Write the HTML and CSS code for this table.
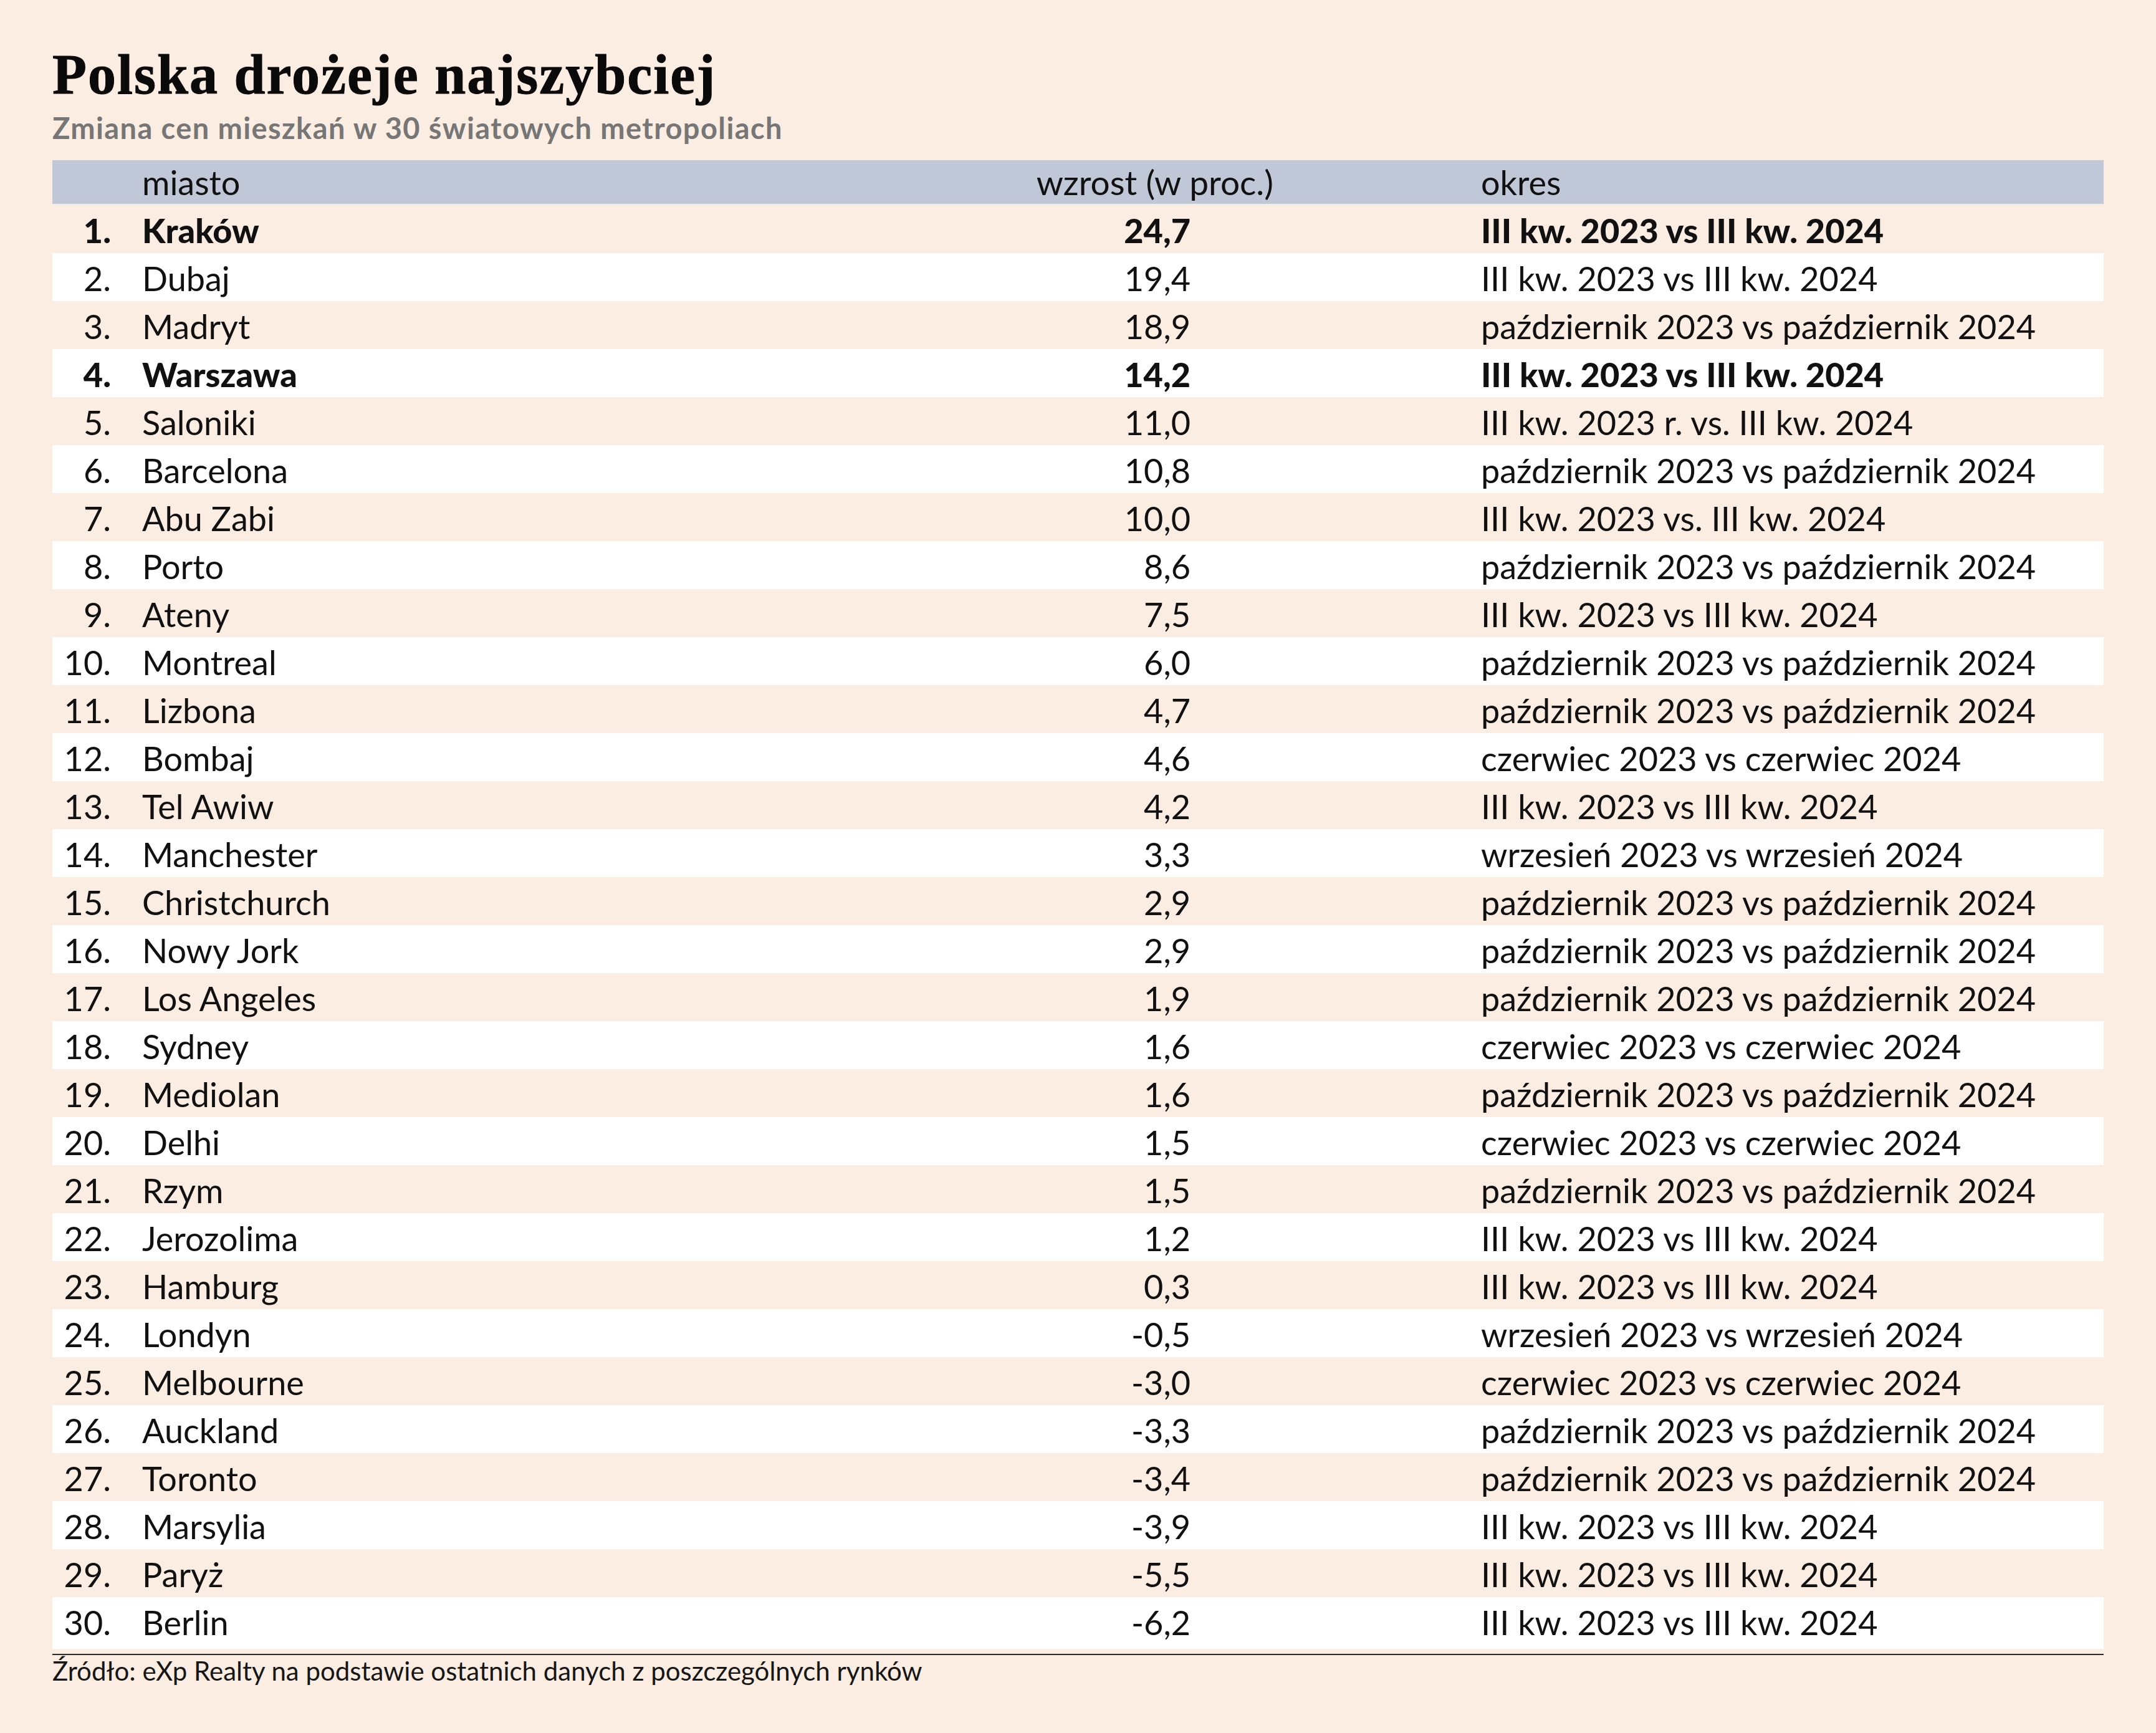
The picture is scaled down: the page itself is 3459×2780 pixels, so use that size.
FILE: index.html
```html
<!DOCTYPE html>
<html lang="pl">
<head>
<meta charset="utf-8">
<title>Polska drożeje najszybciej</title>
<link rel="stylesheet" href="styles.css">
</head>
<body>
<div class="page">
  <h1 class="title">Polska drożeje najszybciej</h1>
  <p class="subtitle">Zmiana cen mieszkań w 30 światowych metropoliach</p>
  <div class="table">
    <div class="row head">
      <span class="num"></span><span class="city">miasto</span><span class="val head-val">wzrost (w proc.)</span><span class="per">okres</span>
    </div>
    <div class="row bold"><span class="num">1.</span><span class="city">Kraków</span><span class="val">24,7</span><span class="per">III kw. 2023 vs III kw. 2024</span></div>
    <div class="row"><span class="num">2.</span><span class="city">Dubaj</span><span class="val">19,4</span><span class="per">III kw. 2023 vs III kw. 2024</span></div>
    <div class="row"><span class="num">3.</span><span class="city">Madryt</span><span class="val">18,9</span><span class="per">październik 2023 vs październik 2024</span></div>
    <div class="row bold"><span class="num">4.</span><span class="city">Warszawa</span><span class="val">14,2</span><span class="per">III kw. 2023 vs III kw. 2024</span></div>
    <div class="row"><span class="num">5.</span><span class="city">Saloniki</span><span class="val">11,0</span><span class="per">III kw. 2023 r. vs. III kw. 2024</span></div>
    <div class="row"><span class="num">6.</span><span class="city">Barcelona</span><span class="val">10,8</span><span class="per">październik 2023 vs październik 2024</span></div>
    <div class="row"><span class="num">7.</span><span class="city">Abu Zabi</span><span class="val">10,0</span><span class="per">III kw. 2023 vs. III kw. 2024</span></div>
    <div class="row"><span class="num">8.</span><span class="city">Porto</span><span class="val">8,6</span><span class="per">październik 2023 vs październik 2024</span></div>
    <div class="row"><span class="num">9.</span><span class="city">Ateny</span><span class="val">7,5</span><span class="per">III kw. 2023 vs III kw. 2024</span></div>
    <div class="row"><span class="num">10.</span><span class="city">Montreal</span><span class="val">6,0</span><span class="per">październik 2023 vs październik 2024</span></div>
    <div class="row"><span class="num">11.</span><span class="city">Lizbona</span><span class="val">4,7</span><span class="per">październik 2023 vs październik 2024</span></div>
    <div class="row"><span class="num">12.</span><span class="city">Bombaj</span><span class="val">4,6</span><span class="per">czerwiec 2023 vs czerwiec 2024</span></div>
    <div class="row"><span class="num">13.</span><span class="city">Tel Awiw</span><span class="val">4,2</span><span class="per">III kw. 2023 vs III kw. 2024</span></div>
    <div class="row"><span class="num">14.</span><span class="city">Manchester</span><span class="val">3,3</span><span class="per">wrzesień 2023 vs wrzesień 2024</span></div>
    <div class="row"><span class="num">15.</span><span class="city">Christchurch</span><span class="val">2,9</span><span class="per">październik 2023 vs październik 2024</span></div>
    <div class="row"><span class="num">16.</span><span class="city">Nowy Jork</span><span class="val">2,9</span><span class="per">październik 2023 vs październik 2024</span></div>
    <div class="row"><span class="num">17.</span><span class="city">Los Angeles</span><span class="val">1,9</span><span class="per">październik 2023 vs październik 2024</span></div>
    <div class="row"><span class="num">18.</span><span class="city">Sydney</span><span class="val">1,6</span><span class="per">czerwiec 2023 vs czerwiec 2024</span></div>
    <div class="row"><span class="num">19.</span><span class="city">Mediolan</span><span class="val">1,6</span><span class="per">październik 2023 vs październik 2024</span></div>
    <div class="row"><span class="num">20.</span><span class="city">Delhi</span><span class="val">1,5</span><span class="per">czerwiec 2023 vs czerwiec 2024</span></div>
    <div class="row"><span class="num">21.</span><span class="city">Rzym</span><span class="val">1,5</span><span class="per">październik 2023 vs październik 2024</span></div>
    <div class="row"><span class="num">22.</span><span class="city">Jerozolima</span><span class="val">1,2</span><span class="per">III kw. 2023 vs III kw. 2024</span></div>
    <div class="row"><span class="num">23.</span><span class="city">Hamburg</span><span class="val">0,3</span><span class="per">III kw. 2023 vs III kw. 2024</span></div>
    <div class="row"><span class="num">24.</span><span class="city">Londyn</span><span class="val">-0,5</span><span class="per">wrzesień 2023 vs wrzesień 2024</span></div>
    <div class="row"><span class="num">25.</span><span class="city">Melbourne</span><span class="val">-3,0</span><span class="per">czerwiec 2023 vs czerwiec 2024</span></div>
    <div class="row"><span class="num">26.</span><span class="city">Auckland</span><span class="val">-3,3</span><span class="per">październik 2023 vs październik 2024</span></div>
    <div class="row"><span class="num">27.</span><span class="city">Toronto</span><span class="val">-3,4</span><span class="per">październik 2023 vs październik 2024</span></div>
    <div class="row"><span class="num">28.</span><span class="city">Marsylia</span><span class="val">-3,9</span><span class="per">III kw. 2023 vs III kw. 2024</span></div>
    <div class="row"><span class="num">29.</span><span class="city">Paryż</span><span class="val">-5,5</span><span class="per">III kw. 2023 vs III kw. 2024</span></div>
    <div class="row"><span class="num">30.</span><span class="city">Berlin</span><span class="val">-6,2</span><span class="per">III kw. 2023 vs III kw. 2024</span></div>
  </div>
  <p class="source">Źródło: eXp Realty na podstawie ostatnich danych z poszczególnych rynków</p>
</div>
</body>
</html>
```

FILE: styles.css
```css
html, body {
  margin: 0;
  padding: 0;
  background: #fbede1;
}
body {
  font-family: "Lato", "Liberation Sans", sans-serif;
  color: #111;
}
.page {
  width: 3291px;
  padding: 0 0 0 84px;
}
.title {
  margin: 0;
  padding-top: 75px;
  font-family: "Liberation Serif", serif;
  font-weight: 700;
  font-size: 90px;
  line-height: 90px;
  letter-spacing: 2px;
  -webkit-text-stroke: 1px #0a0a0a;
  color: #0a0a0a;
  white-space: nowrap;
}
.subtitle {
  margin: 12px 0 0 0;
  font-family: "Lato", sans-serif;
  font-weight: 700;
  font-size: 47px;
  line-height: 56px;
  letter-spacing: 1.4px;
  color: #767676;
  white-space: nowrap;
}
.table {
  margin-top: 24px;
  display: flex;
  flex-direction: column;
  padding-bottom: 8px;
  border-bottom: 2px solid #2a2a2a;
}
.row {
  box-sizing: border-box;
  display: grid;
  grid-template-columns: 144px 1270px 412px 466px 1fr;
  align-items: center;
  height: 77px;
  padding-top: 3px;
  font-size: 54px;
  background: #fbede1;
}
.row:nth-child(odd) {
  background: #ffffff;
}
.row:last-child {
  height: 83px;
  padding-bottom: 6px;
}
.row.head {
  height: 72px;
  padding-top: 0;
  background: #c0c7d7;
  border-bottom: 2px solid #f3ece6;
}
.row.bold {
  font-weight: 900;
}
.num {
  text-align: right;
  padding-right: 50px;
}
.city {
  white-space: nowrap;
}
.val {
  text-align: right;
}
.head-val {
  grid-column: 3 / 5;
  padding-right: 333px;
  font-size: 55px;
}
.per {
  grid-column: 5;
  white-space: nowrap;
}
.source {
  margin: 0;
  font-size: 42px;
  line-height: 50px;
  color: #161616;
  white-space: nowrap;
}
```
